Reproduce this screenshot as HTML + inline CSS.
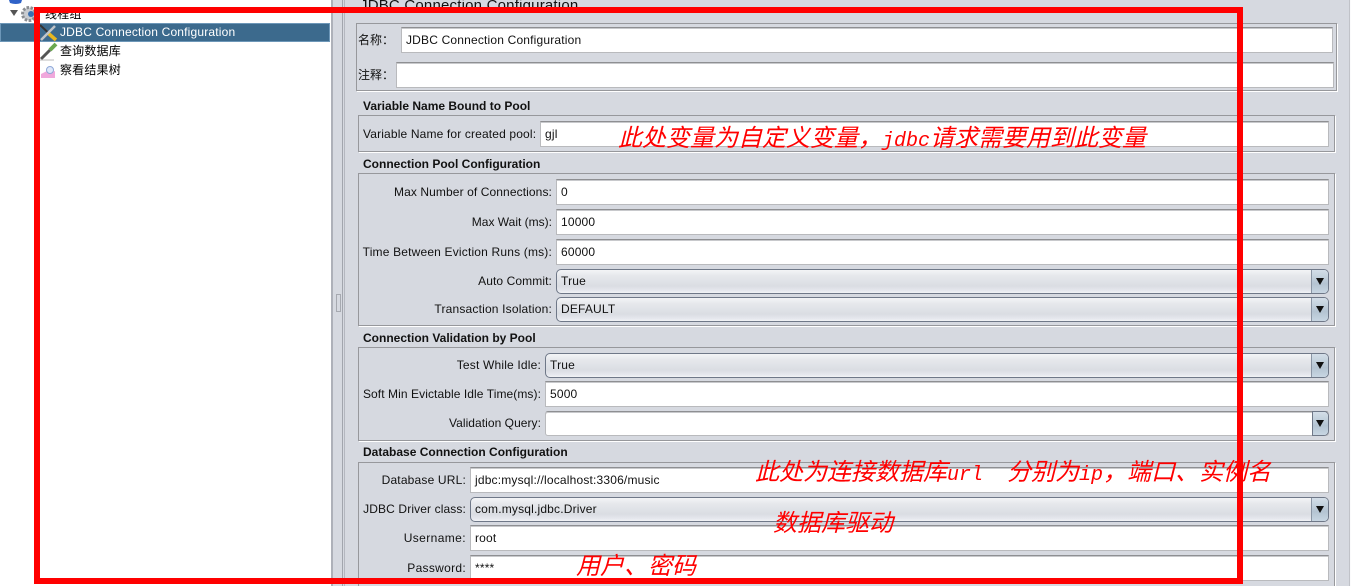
<!DOCTYPE html>
<html><head><meta charset="utf-8">
<style>
html,body{margin:0;padding:0;width:1351px;height:586px;overflow:hidden}
body{background:#d6d9e0;font:12px/18px "Liberation Sans","Noto Sans CJK SC",sans-serif;color:#111;letter-spacing:.18px}
#p{position:absolute;left:0;top:0;width:1351px;height:586px;overflow:hidden;background:#d6d9e0}
#p div{position:absolute;box-sizing:border-box}
#p .panel{border:1px solid #97989c;box-shadow:1px 1px 0 #fff}
#p .h{left:363px;font-weight:bold;white-space:nowrap;height:18px;letter-spacing:0}
#p .l{text-align:right;white-space:nowrap;height:18px;left:340px}
#p .f{background:#fff;border:1px solid #b9babd;border-top:1px solid #8e8f92;box-shadow:inset 0 1px 0 #c8c9cc;padding-left:4px;line-height:24px;white-space:nowrap;right:22px;height:26px}
#p .c{border:1px solid #6f7888;border-radius:5px;background:linear-gradient(#f3f4f6 0,#e6e8ec 25%,#dadde3 70%,#e6e8ee 90%,#f2f3f6 100%);padding-left:4px;line-height:22px;right:22px;height:25px;overflow:hidden}
.c i{position:absolute;right:0;top:0;bottom:0;width:16px;background:linear-gradient(#d3dee8,#b4c4d2 60%,#c8d6e2);border-left:1px solid #8a95a4}
.c i:after{content:"";position:absolute;left:4px;top:8px;border:4px solid transparent;border-top:7px solid #111;border-bottom:0}
#p .t{left:60px;white-space:nowrap;height:18px;color:#000}
#p .a{color:#f00;font-family:"WenQuanYi Zen Hei","Noto Sans CJK SC",sans-serif;font-style:italic;font-size:24px;line-height:28px;white-space:pre;height:28px;letter-spacing:0}
.a span{font-family:"Liberation Mono",monospace;font-size:20px}
.r{background:#f00}
</style></head><body><div id="p">

<div style="left:0;top:0;width:331px;height:586px;background:#fff"></div>
<div style="left:331px;top:0;width:2px;height:586px;background:#aeb1b9"></div>
<div style="left:342px;top:0;width:1px;height:586px;background:#a2a5ad"></div>
<div style="left:344px;top:0;width:1px;height:586px;background:#b4b7bf"></div>
<div style="left:336px;top:294px;width:5px;height:18px;border:1px solid #a6a9b0"></div>
<div style="left:1349px;top:0;width:1px;height:586px;background:#c0c2c8"></div>
<div style="left:1350px;top:0;width:1px;height:586px;background:#fbfbfc"></div>

<!-- tree -->
<div class="t" style="left:45px;top:5px">线程组</div>
<div style="left:0;top:23px;width:330px;height:19px;background:#3c6a8d;border:1px solid #6d97b8"></div>
<svg style="position:absolute;left:0;top:0" width="60" height="84" viewBox="0 0 60 84">
<path d="M9 0h13l-1 3q-5 2-11 0z" fill="#2f62c8"/>
<path d="M10 10h8l-4 6z" fill="#555"/>
<circle cx="29" cy="14" r="6.5" fill="#c9ccd0" stroke="#8b8e92" stroke-width="3" stroke-dasharray="2.5 1.5"/>
<circle cx="31" cy="14" r="3" fill="#3a6fb0"/>
<path d="M40 25l16 15" stroke="#333" stroke-width="2" fill="none"/>
<path d="M48 33l8 7" stroke="#e8b820" stroke-width="3.5"/>
<path d="M41 40L55 26" stroke="#c0c4c8" stroke-width="2.5"/>
<path d="M41 59l9-9" stroke="#555" stroke-width="3"/>
<path d="M50 50l6-6" stroke="#6aa84f" stroke-width="4"/>
<path d="M40 60h14" stroke="#bbb" stroke-width="1"/>
<path d="M41 78v-4l6-3 3 2 5-2v7z" fill="#f0a8dc"/>
<circle cx="50" cy="70" r="3.5" fill="#dfe8fa" stroke="#8fa8d8"/>
</svg>
<div class="t" style="top:23px;color:#fff">JDBC Connection Configuration</div>
<div class="t" style="top:42px">查询数据库</div>
<div class="t" style="top:61px">察看结果树</div>

<!-- title -->
<div style="left:360px;top:-4px;font-size:15px;line-height:20px;white-space:nowrap;height:20px;letter-spacing:.2px">JDBC Connection Configuration</div>

<!-- name panel -->
<div class="panel" style="left:356px;top:23px;width:981px;height:68px"></div>
<div class="l" style="left:358px;top:31px;letter-spacing:0">名称：</div>
<div class="f" style="left:401px;top:27px;right:18px">JDBC Connection Configuration</div>
<div class="l" style="left:358px;top:66px;letter-spacing:0">注释：</div>
<div class="f" style="left:396px;top:62px;right:17px"></div>

<!-- variable -->
<div class="h" style="top:97px">Variable Name Bound to Pool</div>
<div class="panel" style="left:358px;top:115px;width:977px;height:37px"></div>
<div class="l" style="left:363px;top:125px;letter-spacing:.15px">Variable Name for created pool:</div>
<div class="f" style="left:540px;top:121px">gjl</div>

<!-- pool -->
<div class="h" style="top:155px">Connection Pool Configuration</div>
<div class="panel" style="left:358px;top:173px;width:977px;height:153px"></div>
<div class="l" style="width:212px;top:183px;letter-spacing:.1px">Max Number of Connections:</div>
<div class="f" style="left:556px;top:179px">0</div>
<div class="l" style="width:212px;top:213px;letter-spacing:0">Max Wait (ms):</div>
<div class="f" style="left:556px;top:209px">10000</div>
<div class="l" style="width:212px;top:243px">Time Between Eviction Runs (ms):</div>
<div class="f" style="left:556px;top:239px">60000</div>
<div class="l" style="width:212px;top:272px;letter-spacing:.1px">Auto Commit:</div>
<div class="c" style="left:556px;top:269px">True<i></i></div>
<div class="l" style="width:212px;top:300px">Transaction Isolation:</div>
<div class="c" style="left:556px;top:297px">DEFAULT<i></i></div>

<!-- validation -->
<div class="h" style="top:329px">Connection Validation by Pool</div>
<div class="panel" style="left:358px;top:347px;width:977px;height:94px"></div>
<div class="l" style="width:201px;top:356px">Test While Idle:</div>
<div class="c" style="left:545px;top:353px">True<i></i></div>
<div class="l" style="width:201px;top:385px;letter-spacing:.08px">Soft Min Evictable Idle Time(ms):</div>
<div class="f" style="left:545px;top:381px">5000</div>
<div class="l" style="width:201px;top:414px;letter-spacing:.05px">Validation Query:</div>
<div class="f" style="left:545px;top:411px;height:25px;border-radius:3px"></div>
<div class="c" style="left:1312px;top:411px;width:17px;padding:0;border-radius:0 5px 5px 0"><i></i></div>

<!-- database -->
<div class="h" style="top:443px">Database Connection Configuration</div>
<div class="panel" style="left:358px;top:462px;width:977px;height:140px"></div>
<div class="l" style="width:126px;top:471px">Database URL:</div>
<div class="f" style="left:470px;top:467px">jdbc:mysql://localhost:3306/music</div>
<div class="l" style="width:126px;top:500px;letter-spacing:.12px">JDBC Driver class:</div>
<div class="c" style="left:470px;top:497px">com.mysql.jdbc.Driver<i></i></div>
<div class="l" style="width:126px;top:529px;letter-spacing:.4px">Username:</div>
<div class="f" style="left:470px;top:525px">root</div>
<div class="l" style="width:126px;top:559px;letter-spacing:.3px">Password:</div>
<div class="f" style="left:470px;top:555px">****</div>

<!-- annotations -->
<div class="a" style="left:618px;top:122px">此处变量为自定义变量，<span>jdbc</span>请求需要用到此变量</div>
<div class="a" style="left:755px;top:456px">此处为连接数据库<span>url  </span>分别为<span>ip</span>，端口、实例名</div>
<div class="a" style="left:773px;top:507px">数据库驱动</div>
<div class="a" style="left:576px;top:550px">用户、密码</div>

<!-- red rectangle -->
<div class="r" style="left:34px;top:7px;width:1209px;height:6px"></div>
<div class="r" style="left:34px;top:578px;width:1209px;height:6px"></div>
<div class="r" style="left:34px;top:7px;width:6px;height:577px"></div>
<div class="r" style="left:1237px;top:7px;width:6px;height:577px"></div>
</div></body></html>
